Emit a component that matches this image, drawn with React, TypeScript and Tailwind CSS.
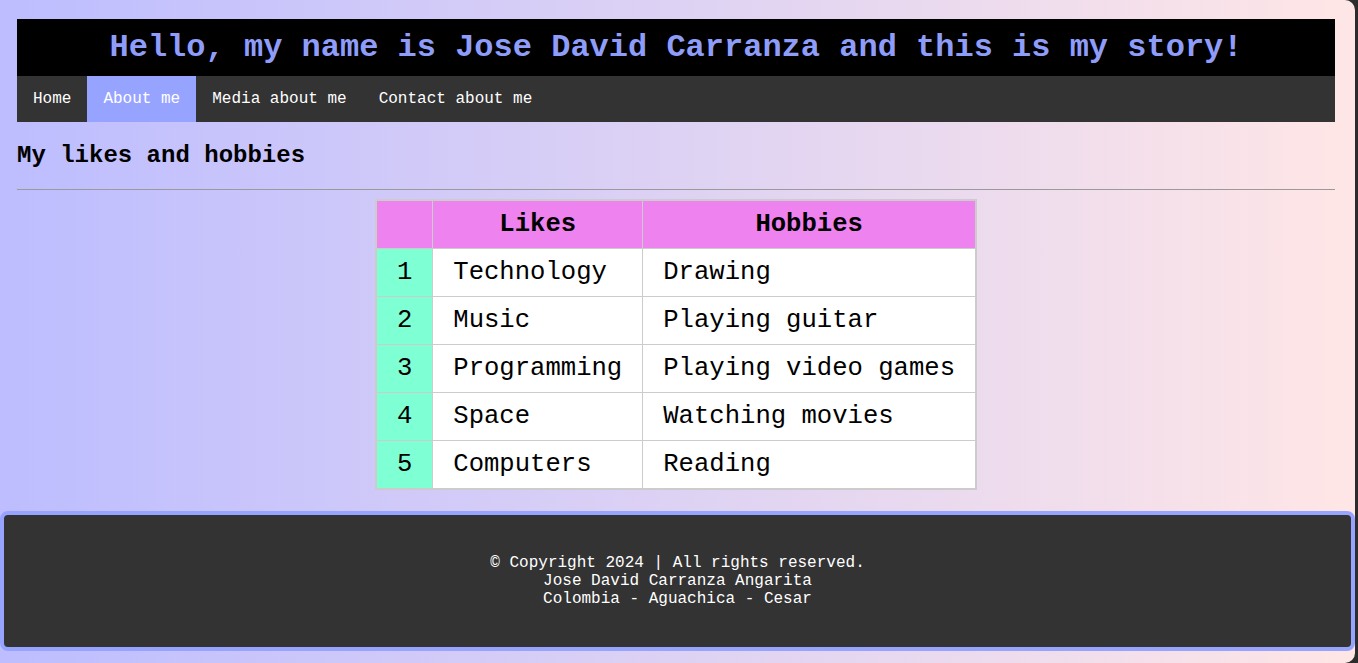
import React from 'react'

const rows = [
  ['1', 'Technology', 'Drawing'],
  ['2', 'Music', 'Playing guitar'],
  ['3', 'Programming', 'Playing video games'],
  ['4', 'Space', 'Watching movies'],
  ['5', 'Computers', 'Reading'],
]

const navItems = ['Home', 'About me', 'Media about me', 'Contact about me']

const App = () => {
  return (
    <div className="w-full min-h-[663px] bg-[#2c2c2c] font-['Liberation_Mono',monospace]">
      <div className="w-[calc(100%-3px)] min-h-[663px] rounded-tr-[10px] rounded-br-[10px] bg-gradient-to-r from-[#bdbdff] to-[#ffe6e6] pt-[19px] pb-[12px] flex flex-col">
        {/* Header + nav */}
        <div className="pl-[17px] pr-[20px]">
          <header className="bg-black py-[10px] text-center">
            <h1 className="text-[32px] leading-[37px] font-bold text-[#8f9dfa]">
              Hello, my name is Jose David Carranza and this is my story!
            </h1>
          </header>
          <nav className="bg-[#333333] flex">
            {navItems.map((item) => (
              <a
                key={item}
                className={
                  item === 'About me'
                    ? 'block px-4 py-[14px] text-[16px] leading-[18px] text-white bg-[#97a4ff]'
                    : 'block px-4 py-[14px] text-[16px] leading-[18px] text-white'
                }
              >
                {item}
              </a>
            ))}
          </nav>

          <h2 className="mt-[20px] text-[24px] leading-[27px] font-bold text-black">My likes and hobbies</h2>
          <hr className="mt-[20px] mb-[9px] border-t border-[#9a9a9a]" />

          {/* Likes / hobbies table */}
          <div className="flex justify-center">
            <table className="border-collapse border-2 border-[#cccccc] text-[25.6px] leading-[29px] text-black">
              <thead>
                <tr className="bg-[#ee82ee]">
                  <th className="border border-[#cccccc] px-5 py-[9px]"></th>
                  <th className="border border-[#cccccc] px-5 py-[9px] font-bold">Likes</th>
                  <th className="border border-[#cccccc] px-5 py-[9px] font-bold">Hobbies</th>
                </tr>
              </thead>
              <tbody>
                {rows.map(([n, like, hobby]) => (
                  <tr key={n} className="bg-white">
                    <td className="border border-[#cccccc] px-5 py-[9px] text-center bg-[#7fffd4]">{n}</td>
                    <td className="border border-[#cccccc] px-5 py-[9px] text-left">{like}</td>
                    <td className="border border-[#cccccc] px-5 py-[9px] text-left">{hobby}</td>
                  </tr>
                ))}
              </tbody>
            </table>
          </div>
        </div>

        {/* Footer */}
        <footer className="mt-[21px] border-4 border-[#97a4ff] rounded-[8px] bg-[#333333] py-[39px] text-center text-white text-[16px] leading-[18px]">
          <p>© Copyright 2024 | All rights reserved.</p>
          <p>Jose David Carranza Angarita</p>
          <p>Colombia - Aguachica - Cesar</p>
        </footer>
      </div>
    </div>
  )
}

export default App
